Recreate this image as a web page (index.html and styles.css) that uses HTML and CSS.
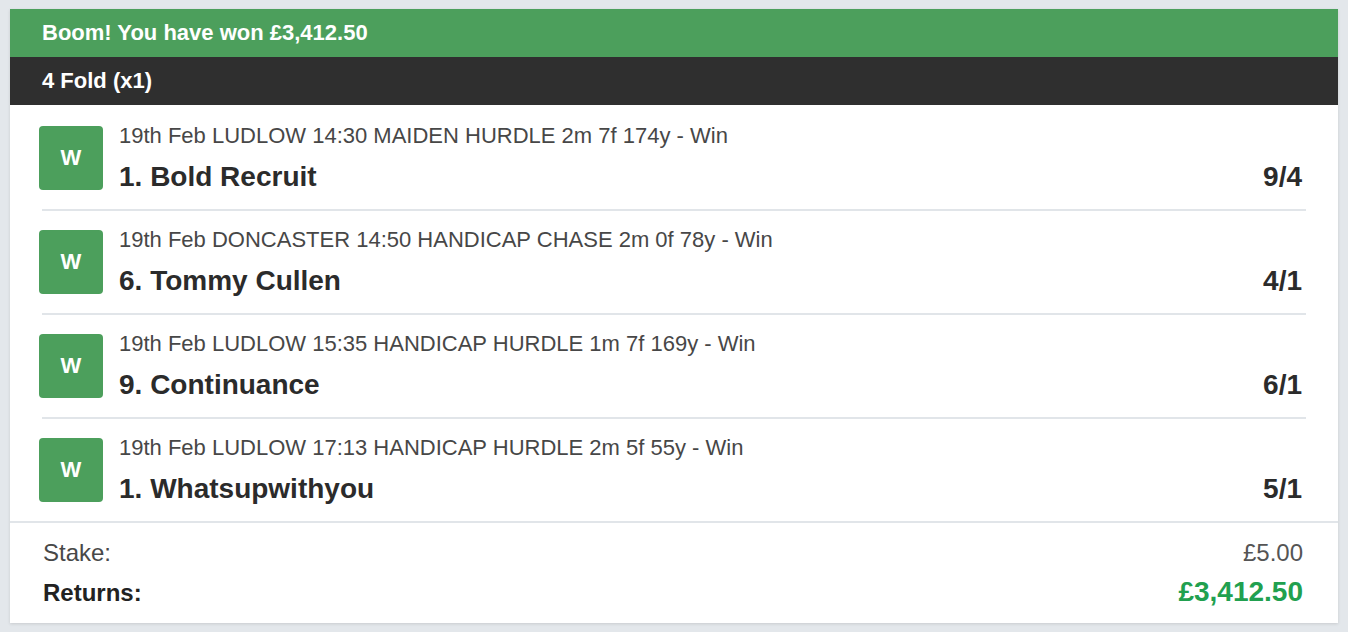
FILE: index.html
```html
<!DOCTYPE html>
<html lang="en">
<head>
    <meta charset="UTF-8">
    <meta name="viewport" content="width=device-width, initial-scale=1.0">
    <title>Bet Receipt</title>
    <link rel="stylesheet" href="styles.css">
</head>
<body>
    <section class="bet-card">
        <div class="banner">Boom! You have won £3,412.50</div>
        <div class="bet-type">4 Fold (x1)</div>

        <div class="legs">
            <article class="leg">
                <div class="result-badge">W</div>
                <div class="leg-info">
                    <div class="leg-event">19th Feb LUDLOW 14:30 MAIDEN HURDLE 2m 7f 174y - Win</div>
                    <div class="leg-line">
                        <span class="leg-name">1. Bold Recruit</span>
                        <span class="leg-odds">9/4</span>
                    </div>
                </div>
            </article>
            <article class="leg">
                <div class="result-badge">W</div>
                <div class="leg-info">
                    <div class="leg-event">19th Feb DONCASTER 14:50 HANDICAP CHASE 2m 0f 78y - Win</div>
                    <div class="leg-line">
                        <span class="leg-name">6. Tommy Cullen</span>
                        <span class="leg-odds">4/1</span>
                    </div>
                </div>
            </article>
            <article class="leg">
                <div class="result-badge">W</div>
                <div class="leg-info">
                    <div class="leg-event">19th Feb LUDLOW 15:35 HANDICAP HURDLE 1m 7f 169y - Win</div>
                    <div class="leg-line">
                        <span class="leg-name">9. Continuance</span>
                        <span class="leg-odds">6/1</span>
                    </div>
                </div>
            </article>
            <article class="leg">
                <div class="result-badge">W</div>
                <div class="leg-info">
                    <div class="leg-event">19th Feb LUDLOW 17:13 HANDICAP HURDLE 2m 5f 55y - Win</div>
                    <div class="leg-line">
                        <span class="leg-name">1. Whatsupwithyou</span>
                        <span class="leg-odds">5/1</span>
                    </div>
                </div>
            </article>
        </div>

        <div class="totals">
            <div class="total-row">
                <span>Stake:</span>
                <span class="stake-value">£5.00</span>
            </div>
            <div class="total-row returns">
                <span>Returns:</span>
                <span class="returns-value">£3,412.50</span>
            </div>
        </div>
    </section>
</body>
</html>
```

FILE: styles.css
```css
/* General Styles */
body {
    font-family: "Liberation Sans", Arial, sans-serif;
    background-color: #e3e7eb;
    margin: 0;
    padding: 9px 10px;
    color: #2b2b2b;
}

.bet-card {
    background-color: #fff;
    box-shadow: 0 1px 3px rgba(0, 0, 0, 0.12);
}

/* Header bars */
.banner,
.bet-type {
    height: 48px;
    display: flex;
    align-items: center;
    padding: 0 32px;
    color: #fff;
    font-weight: bold;
    font-size: 22px;
}

.banner {
    background-color: #4c9f5c;
}

.bet-type {
    background-color: #2f2f2f;
}

/* Legs */
.legs {
    border-bottom: 2px solid #e1e5e9;
}

.leg {
    display: flex;
    gap: 16px;
    margin: 0 32px;
    padding: 19px 0 16px;
    border-bottom: 2px solid #e1e5e9;
}

.leg + .leg {
    padding-top: 17px;
}

.leg:last-child {
    border-bottom: none;
}

.result-badge {
    flex: 0 0 64px;
    height: 64px;
    margin: 2px 0 0 -3px;
    background-color: #4c9f5c;
    border-radius: 4px;
    color: #fff;
    font-weight: bold;
    font-size: 22px;
    display: flex;
    align-items: center;
    justify-content: center;
}

.leg-info {
    flex: 1;
}

.leg-event {
    font-size: 22px;
    color: #474747;
    line-height: 24px;
}

.leg-line {
    display: flex;
    justify-content: space-between;
    align-items: baseline;
    margin-top: 13px;
    padding-right: 4px;
    font-size: 28px;
    font-weight: bold;
    line-height: 32px;
}

/* Totals */
.totals {
    padding: 16px 35px 14px 33px;
}

.total-row {
    display: flex;
    justify-content: space-between;
    align-items: baseline;
    font-size: 24px;
    color: #484848;
    line-height: 28px;
}

.total-row.returns {
    margin-top: 9px;
    color: #222;
    font-weight: bold;
    line-height: 32px;
}

.stake-value {
    color: #555;
}

.returns-value {
    color: #21a04f;
    font-size: 28px;
}
```
